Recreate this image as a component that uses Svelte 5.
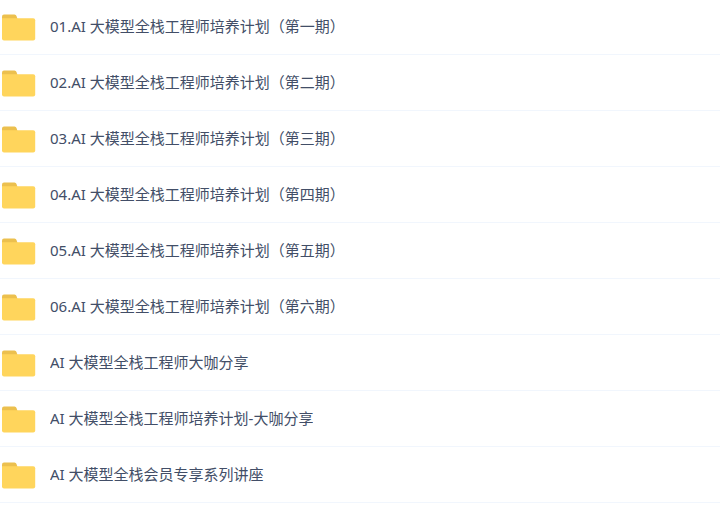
<script lang="ts">
  const folders = [
    '01.AI 大模型全栈工程师培养计划（第一期）',
    '02.AI 大模型全栈工程师培养计划（第二期）',
    '03.AI 大模型全栈工程师培养计划（第三期）',
    '04.AI 大模型全栈工程师培养计划（第四期）',
    '05.AI 大模型全栈工程师培养计划（第五期）',
    '06.AI 大模型全栈工程师培养计划（第六期）',
    'AI 大模型全栈工程师大咖分享',
    'AI 大模型全栈工程师培养计划-大咖分享',
    'AI 大模型全栈会员专享系列讲座',
  ];
</script>

<ul class="folders" lang="zh-CN">
  {#each folders as name}
    <li class="row">
      <svg class="icon" viewBox="0 0 36 30" aria-hidden="true">
        <path d="M2 10V4.6q0-2 2-2h10.5q1.5 0 2 1.5l1 3V10z" fill="#ecc04e" />
        <path d="M2 6.3h31.2q2 0 2 2v18.2q0 2-2 2H4q-2 0-2-2z" fill="#ffd55c" />
      </svg>
      <a class="name" href="#folder">{name}</a>
    </li>
  {/each}
</ul>

<style>
  :global(body) {
    background: #fff;
  }

  .folders {
    margin: -1px 0 0;
    padding: 0;
    list-style: none;
    font-family: 'Noto Sans', 'Noto Sans CJK SC', sans-serif;
    font-size: 15px;
    line-height: 24px;
  }

  .row {
    display: flex;
    align-items: center;
    gap: 14px;
    box-sizing: border-box;
    height: 56px;
    border-bottom: 1px solid #f1f6fd;
  }

  .icon {
    flex: none;
    width: 36px;
    height: 30px;
  }

  .name {
    overflow: hidden;
    padding-bottom: 2px;
    color: #424e67;
    text-decoration: none;
    text-overflow: ellipsis;
    white-space: nowrap;
  }
</style>
